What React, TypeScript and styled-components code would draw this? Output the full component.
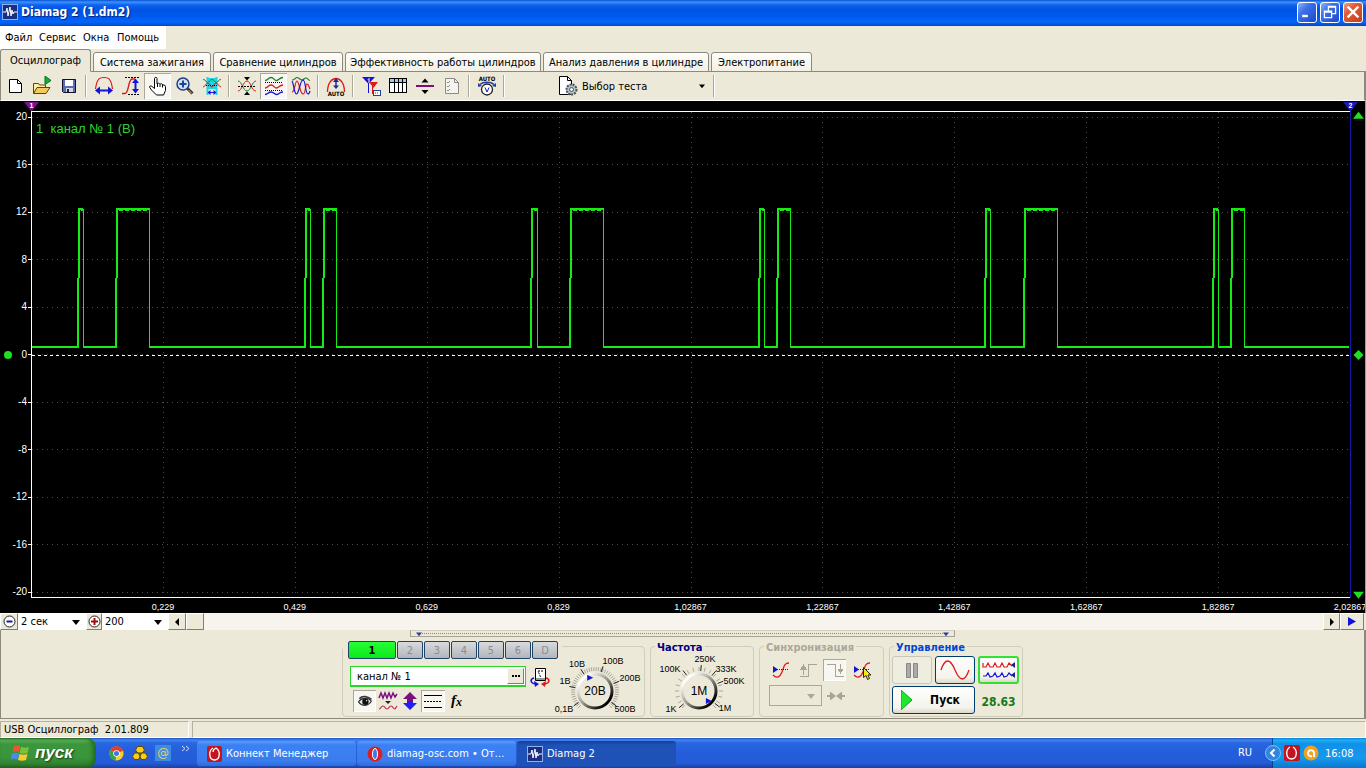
import React from "react";
import styled, { createGlobalStyle } from "styled-components";

const FONT = '"DejaVu Sans Condensed", "DejaVu Sans", "Liberation Sans", sans-serif';
const NARROW = '"Liberation Sans", Arial, sans-serif';
const FACE = "#ece9d8";
const LINE = "#8c8a7c";

const GlobalStyle = createGlobalStyle`
  * { box-sizing: border-box; }
  body { margin: 0; background: ${FACE}; font-family: ${FONT}; font-size: 11px; color: #000; }
  button, input, select { font: inherit; color: inherit; margin: 0; padding: 0; border: 0; background: none; border-radius: 0; outline: none; }
  svg { display: block; flex: none; }
`;

const Window = styled.div`
  display: flex;
  flex-direction: column;
  min-height: 100vh;
  overflow: hidden;
`;

/* ---------- title bar ---------- */

const TitleBar = styled.header`
  display: flex;
  align-items: center;
  gap: 3px;
  height: 26px;
  padding: 0 3px 2px 2px;
  background: linear-gradient(#0a50d0 0, #3b93ff 2px, #0f62ee 5px, #0054e3 10px, #0058ee 16px, #0266fb 22px, #0046c8 26px);
`;

const Title = styled.h1`
  flex: 1;
  margin: 0;
  color: #fff;
  font-size: 12px;
  font-weight: bold;
  line-height: 18px;
  text-shadow: 1px 1px 1px #0a1f7a;
`;

const CaptionButton = styled.button<{ $close?: boolean }>`
  display: grid;
  place-items: center;
  width: 20px;
  height: 21px;
  border: 1px solid #fff;
  border-radius: 3px;
  background: ${(p) =>
    p.$close
      ? "linear-gradient(135deg, #f0a08a, #e25b38 35%, #c83c14)"
      : "linear-gradient(135deg, #8fb4fb, #3c72ea 35%, #1c48c8)"};
`;

/* ---------- menu and tabs ---------- */

const MenuRow = styled.nav`
  display: flex;
  height: 23px;
`;

const MenuStrip = styled.div`
  display: flex;
  align-items: center;
  gap: 7px;
  padding: 0 9px 0 5px;
  background: #fff;
`;

const MenuItem = styled.button<{ $w: number }>`
  width: ${(p) => p.$w}px;
  text-align: left;
  white-space: nowrap;
`;

const Tabs = styled.div`
  display: flex;
  align-items: flex-end;
  gap: 2px;
  height: 23px;
  box-shadow: inset 0 -1px 0 ${LINE};
`;

const Tab = styled.button<{ $w: number; $active?: boolean }>`
  width: ${(p) => p.$w}px;
  height: ${(p) => (p.$active ? 23 : 20)}px;
  border: 1px solid ${LINE};
  border-bottom-color: ${(p) => (p.$active ? FACE : LINE)};
  border-radius: 3px 3px 0 0;
  background: ${(p) => (p.$active ? FACE : "linear-gradient(#fdfdfa, #f3f1e6)")};
  white-space: nowrap;
`;

/* ---------- toolbar ---------- */

const Toolbar = styled.div`
  display: flex;
  align-items: center;
  height: 29px;
  border-left: 1px solid ${LINE};
  border-right: 2px solid ${LINE};
  border-bottom: 1px solid #fff;
`;

const ToolButton = styled.button<{ $pressed?: boolean }>`
  display: grid;
  place-items: center;
  width: 27px;
  height: 26px;
  background: ${(p) => (p.$pressed ? "#f7f6f0" : "none")};
  box-shadow: ${(p) => (p.$pressed ? "inset 1px 1px 0 #aca899, inset -1px -1px 0 #fff" : "none")};
`;

const Separator = styled.span`
  width: 2px;
  height: 22px;
  margin: 0 3px;
  border-left: 1px solid #aca899;
  border-right: 1px solid #fff;
`;

const TestButton = styled.button`
  display: flex;
  align-items: center;
  gap: 4px;
  width: 202px;
  height: 24px;
  padding: 0 5px 0 49px;
  text-align: left;
  span { flex: 1; }
`;

/* ---------- oscilloscope screen ---------- */

const Scope = styled.main`
  flex: 1 1 0;
  display: grid;
  grid-template-columns: 31px minmax(0, 1fr) 15px;
  grid-template-rows: 10px minmax(0, 1fr) 15px;
  min-height: 300px;
  border-right: 1px solid #9a9ab0;
  background: #000;
  color: #fff;
  font-family: ${NARROW};
  font-size: 10px;
  overflow: hidden;
`;

const MarkerRow = styled.div`
  grid-column: 2;
  display: flex;
  justify-content: space-between;
  margin: 1px -8px 0 -7px;
`;

const YAxis = styled.ol`
  grid-column: 1;
  grid-row: 2;
  position: relative;
  display: flex;
  flex-direction: column;
  justify-content: space-between;
  margin: 0;
  padding: 0;
  list-style: none;
`;

const YLabel = styled.li`
  display: flex;
  align-items: center;
  justify-content: flex-end;
  gap: 1px;
  height: 12px;
  line-height: 12px;
  &::after { content: ""; width: 3px; height: 1px; background: #fff; }
`;

const ZeroDot = styled.i`
  position: absolute;
  left: 4px;
  top: calc(50% - 4px);
  width: 8px;
  height: 8px;
  border-radius: 50%;
  background: #1fe01f;
`;

const Screen = styled.section`
  grid-column: 2;
  grid-row: 2;
  position: relative;
  min-height: 0;
  border: solid #fff;
  border-width: 1px 0 1px 1px;
  box-shadow: 1px 0 0 #1818a8;
  svg { width: 100%; height: 100%; }
`;

const ChannelCaption = styled.p`
  position: absolute;
  left: 4px;
  top: 9px;
  margin: 0;
  color: #2fd42f;
  font-size: 13px;
  line-height: 16px;
  white-space: pre;
`;

const RightRail = styled.div`
  grid-column: 3;
  grid-row: 2;
  display: flex;
  flex-direction: column;
  align-items: flex-end;
  justify-content: space-between;
  margin: -2px 1px -2px 0;
`;

const XAxis = styled.ol`
  grid-column: 2;
  grid-row: 3;
  display: flex;
  margin: 0 -5% 0 5%;
  padding: 3px 0 0;
  list-style: none;
  font-size: 9px;
  line-height: 12px;
  li { flex: 1 1 0; text-align: center; }
`;

/* ---------- zoom and scroll row ---------- */

const ScrollRow = styled.div`
  display: flex;
  height: 17px;
  margin-right: 2px;
`;

const RaisedButton = styled.button<{ $w: number }>`
  display: grid;
  place-items: center;
  flex: none;
  width: ${(p) => p.$w}px;
  background: ${FACE};
  border: 1px solid;
  border-color: #fff #817f73 #817f73 #fff;
`;

const Combo = styled.label<{ $w: number; $disabled?: boolean }>`
  position: relative;
  display: flex;
  align-items: center;
  width: ${(p) => p.$w}px;
  height: ${(p) => (p.$disabled ? "21px" : "auto")};
  background: ${(p) => (p.$disabled ? FACE : "#fff")};
  border: ${(p) => (p.$disabled ? "1px solid #aca899" : "0")};
  select { appearance: none; width: 100%; padding-left: 3px; }
  svg { position: absolute; right: 6px; pointer-events: none; }
`;

const Track = styled.div`
  flex: 1;
  background: #f6f4ec;
`;

/* ---------- control deck ---------- */

const Deck = styled.section`
  display: flex;
  flex-direction: column;
  align-items: center;
  height: 89px;
  border: solid ${LINE};
  border-width: 0 2px 1px 1px;
`;

const Splitter = styled.div`
  display: flex;
  align-items: center;
  justify-content: space-between;
  width: 40%;
  height: 7px;
  padding: 0 5px;
  border: 1px solid #a5a395;
  border-top-color: #d2cfbf;
  span { flex: 1; height: 1px; border-top: 1px dotted #8a8878; }
`;

const Groups = styled.div`
  display: flex;
  align-items: flex-end;
  gap: 5px;
  height: 80px;
`;

const Group = styled.fieldset<{ $w: number }>`
  display: flex;
  width: ${(p) => p.$w}px;
  height: 71px;
  margin: 0;
  padding: 0;
  border: 1px solid #d0cdbb;
  border-radius: 4px;
  min-width: 0;
`;

const Legend = styled.h2<{ $color: string }>`
  margin: -6px 0 0 4px;
  padding: 0 2px;
  width: max-content;
  background: ${FACE};
  color: ${(p) => p.$color};
  font-size: 11px;
  line-height: 14px;
  font-weight: bold;
  white-space: nowrap;
`;

const Column = styled.div`
  display: flex;
  flex-direction: column;
  flex: none;
`;

const DialSlot = styled.div`
  margin-top: -8px;
`;

const ChannelTabs = styled.div`
  display: flex;
  gap: 1px;
  width: 219px;
  margin-top: -6px;
  padding: 0 5px;
  background: ${FACE};
`;

const ChannelTab = styled.button<{ $on?: boolean }>`
  flex: none;
  width: ${(p) => (p.$on ? 48 : 26)}px;
  height: 18px;
  border: 1px solid #1f4467;
  border-radius: 2px;
  background: ${(p) => (p.$on ? "linear-gradient(#25ff35, #0ce81c)" : "linear-gradient(#d8dadc, #b2b6bc)")};
  color: ${(p) => (p.$on ? "#000" : "#8a8d90")};
  font-weight: ${(p) => (p.$on ? "bold" : "normal")};
`;

const NameRow = styled.div`
  display: flex;
  align-items: center;
  gap: 4px;
  margin: 7px 0 0 7px;
`;

const NameBox = styled.label`
  display: flex;
  width: 176px;
  height: 21px;
  padding: 1px;
  border: 2px solid #2ad52a;
  border-width: 1px 1px 2px 1px;
  background: #fff;
  input { flex: 1; min-width: 0; padding-left: 5px; }
`;

const IconRow = styled.div`
  display: flex;
  align-items: center;
  margin: 3px 0 0 10px;
`;

const SmallTool = styled.button<{ $pressed?: boolean; $w?: number }>`
  display: grid;
  place-items: center;
  width: ${(p) => p.$w ?? 23}px;
  height: 22px;
  background: ${(p) => (p.$pressed ? "#f7f6f0" : "none")};
  box-shadow: ${(p) => (p.$pressed ? "inset 1px 1px 0 #aca899, inset -1px -1px 0 #fff" : "none")};
`;

const DialSvg = styled.svg`
  font-family: ${NARROW};
  font-size: 9px;
  overflow: visible;
`;

const SyncRow = styled.div`
  display: flex;
  align-items: center;
  gap: 4px;
  margin: 4px 0 0 9px;
`;

const ControlGrid = styled.div`
  display: grid;
  grid-template-columns: 40px 40px 41px;
  grid-template-rows: 28px 28px;
  gap: 2px 3px;
  margin: 1px 0 0 2px;
`;

const PushButton = styled.button<{ $disabled?: boolean; $tone?: "green"; $wide?: boolean }>`
  display: flex;
  align-items: center;
  justify-content: center;
  gap: 18px;
  grid-column: ${(p) => (p.$wide ? "span 2" : "auto")};
  padding-right: ${(p) => (p.$wide ? 6 : 0)}px;
  border: ${(p) => (p.$tone ? "2px solid #35e035" : p.$disabled ? "1px solid #c9c7ba" : "1px solid #003c74")};
  border-radius: 3px;
  background: ${(p) => (p.$disabled ? "#efece0" : "linear-gradient(#fff, #f4f3ec 80%, #dcd8c8)")};
  font-weight: bold;
  font-size: 12px;
`;

const Reading = styled.output`
  align-self: center;
  text-align: center;
  color: #157a15;
  font-size: 12px;
  line-height: 16px;
  font-weight: bold;
  padding-top: 4px;
`;

/* ---------- status bar ---------- */

const StatusBar = styled.footer`
  display: flex;
  gap: 3px;
  height: 19px;
  padding-top: 2px;
`;

const StatusCell = styled.p<{ $w?: number }>`
  flex: ${(p) => (p.$w ? `0 0 ${p.$w}px` : "1")};
  margin: 0;
  padding-left: 3px;
  border: 1px solid;
  border-color: #b4b1a1 #fff #fff #b4b1a1;
  line-height: 15px;
  white-space: pre;
`;

/* ---------- taskbar ---------- */

const Taskbar = styled.footer`
  display: flex;
  height: 30px;
  background: linear-gradient(#1f4fc0 0, #3f86f0 2px, #2a66e0 5px, #245edb 14px, #245bd8 25px, #1941a5 30px);
  color: #fff;
`;

const StartButton = styled.button`
  display: flex;
  align-items: center;
  gap: 5px;
  width: 96px;
  padding-left: 11px;
  border-radius: 0 9px 9px 0;
  background: linear-gradient(#2c6c2c 0, #5cb45c 2px, #3c963c 6px, #3a943a 20px, #2f7d2f 27px, #1f5a1f 30px);
  box-shadow: inset -3px 0 4px #1f6a1f;
  font-family: ${NARROW};
  font-size: 17px;
  font-weight: bold;
  font-style: italic;
  text-shadow: 1px 1px 2px #113a11;
`;

const QuickLaunch = styled.div`
  display: flex;
  align-items: center;
  gap: 8px;
  width: 101px;
  padding-left: 13px;
`;

const QuickButton = styled.button`
  display: grid;
  place-items: center;
  width: 15px;
  height: 20px;
`;

const TaskButton = styled.button<{ $active?: boolean }>`
  display: flex;
  align-items: center;
  gap: 4px;
  width: 159px;
  height: 25px;
  margin: 3px 1px 0 0;
  padding-left: 10px;
  border-radius: 3px;
  background: ${(p) =>
    p.$active ? "linear-gradient(#163f96, #1e52b7 4px, #1e52b7)" : "linear-gradient(#5a9bfb, #3c81f3 4px, #3a7cee 20px, #2f6bdc)"};
  white-space: nowrap;
`;

const Language = styled.span`
  margin: 0 20px 0 auto;
  line-height: 30px;
`;

const Tray = styled.div`
  display: flex;
  align-items: center;
  gap: 3px;
  width: 94px;
  border-left: 1px solid #0b3f9c;
  background: linear-gradient(#0d7fd8 0, #1cb0f7 2px, #1290e8 6px, #139aee 20px, #0f75cc 30px);
  svg:first-child { margin-left: -8px; }
  time { margin-left: 3px; }
`;

/* ---------- icons ---------- */

const RED = "#e01818";
const BLUE = "#1414d8";
const GREEN = "#1c7c2c";

const Glyph = ({ children, size = 20, crisp = false }: { children: React.ReactNode; size?: number; crisp?: boolean }) => (
  <svg width={size} height={size} viewBox="0 0 20 20" fill="none" shapeRendering={crisp ? "crispEdges" : "auto"} aria-hidden>
    {children}
  </svg>
);

const AppIcon = ({ size = 16 }: { size?: number }) => (
  <svg width={size} height={size} viewBox="0 0 16 16" aria-hidden>
    <rect x=".5" y=".5" width="15" height="15" fill="#1a2f80" stroke="#8fb0f0" />
    <path d="M1 8h3l1-4 1 8 2-9 1 9 1-6 1 4 1-2h3" fill="none" stroke="#fff" />
  </svg>
);

const NewIcon = () => (
  <Glyph><path d="M4.500 3.500h8l4 4v9h-12z" fill="#fff" stroke="#000" /><path d="M12.500 3.500v4h4" stroke="#000" /></Glyph>
);
const OpenIcon = () => (
  <Glyph>
    <path d="M1.500 17.500v-10h5l1 1.500h6v3" fill="#fff0a0" stroke="#5a4600" />
    <path d="M1.500 17.500l3.500-6h13l-4 6z" fill="#f5c860" stroke="#5a4600" />
    <path d="M13 0l6 4.500-6 4z" fill="#10b030" stroke="#0a7020" />
  </Glyph>
);
const SaveIcon = () => (
  <Glyph>
    <path d="M3.500 3.500h13v13h-12l-1-1z" fill="#5a6cb8" stroke="#101030" />
    <path d="M6 4h8v6H6z" fill="#fff" /><path d="M7 12h7v4H7z" fill="#d8d8e0" /><path d="M8 13h2v3H8z" fill="#202040" />
  </Glyph>
);
const ArchWidthIcon = () => (
  <Glyph>
    <path d="M1.500 13C3 1 7 1.500 10 1.500S17 1 18.500 13" stroke={RED} strokeWidth="1.200" />
    <path d="M4 14.500h12" stroke={BLUE} strokeWidth="2" /><path d="M1 14.500l5-4v8zM19 14.500l-5-4v8z" fill={BLUE} />
  </Glyph>
);
const RiseHeightIcon = () => (
  <Glyph>
    <path d="M1 17.500h3c4 0 3-14 7-14.500h3" stroke={RED} strokeWidth="1.400" />
    <path d="M4 1.500h14M7 18.500h11" stroke="#000" strokeDasharray="2 1" />
    <path d="M14.500 5v10" stroke={BLUE} strokeWidth="2" /><path d="M14.500 2.500l-3.500 4.500h7zM14.500 17.500L11 13h7z" fill={BLUE} />
  </Glyph>
);
const HandIcon = () => (
  <Glyph>
    <path d="M6.500 2.500c0-1.500 2.500-1.500 2.500 0V8l1.500-.8 1.500 1 1.500-.5 1.500 1.300 1.500 0 1 1.500v4l-2 4.500h-7L3.500 14l-2-3c0-1.200 1.500-1.500 2.500-.5l2.500 2z" fill="#fff" stroke="#000" />
    <path d="M9.500 8v3M12 8.500V11M14.500 9v2.500" stroke="#000" />
  </Glyph>
);
const ZoomIcon = () => (
  <Glyph>
    <path d="M12.500 12.500l5 5" stroke="#303030" strokeWidth="3" /><path d="M13.500 14l3.500 3.500" stroke="#d8b878" />
    <circle cx="8" cy="8" r="6" fill="#cfe4fa" stroke="#1f3c80" strokeWidth="1.500" /><path d="M4.500 8h7M8 4.500v7" stroke="#1f4090" strokeWidth="2" />
  </Glyph>
);
const RangeIcon = () => (
  <Glyph>
    <path d="M6 2h8v11H6z" fill="#18d8e8" /><path d="M5.500 1v18M14.500 1v18" stroke="#18d8e8" strokeWidth="2" />
    <path d="M1 3.500c3 0 3 3 4.500 3S8 3.500 10 3.500s3 3 4.500 3 1.500-3 4.500-3" stroke={GREEN} />
    <path d="M1 11c2 0 3-4 5-4s2 4 4 4 2-4 4-4 3 4 5 4" stroke={RED} />
    <path d="M4 9.500h12" stroke="#000" strokeDasharray="1 1" />
    <path d="M8 16.500h4" stroke={BLUE} /><path d="M5.500 16.500l3-2.500v5zM14.500 16.500l-3-2.500v5z" fill={BLUE} />
  </Glyph>
);
const CrossWavesIcon = () => (
  <Glyph>
    <path d="M1 15c4 0 5-10 9-10s4 10 9 10" stroke={RED} /><path d="M1 5c4 0 5 10 9 10S15 5 19 5" stroke={GREEN} />
    <path d="M1 10.500h18" stroke="#000" strokeDasharray="2 1" /><path d="M7 1h6l-3 3.500zM7 19h6l-3-3.500z" fill="#000" />
  </Glyph>
);
const StackWavesIcon = () => (
  <Glyph>
    <path d="M1 4.500c3 0 3-3 6-3s3 3 5.500 3 2.500-3 6.500-3" stroke={GREEN} strokeWidth="1.300" />
    <path d="M1 12c3 0 3-3 6-3s3 3 5.500 3 2.500-3 6.500-3" stroke={RED} strokeWidth="1.300" />
    <path d="M1 18.500c3 0 3-2.500 6-2.500s3 2.500 5.500 2.500 2.500-2.500 6.500-2.500" stroke={BLUE} strokeWidth="1.300" />
    <path d="M1 6.500h18M1 14.500h18" stroke="#000" strokeDasharray="1 1" />
  </Glyph>
);
const MixWavesIcon = () => (
  <Glyph>
    <path d="M1 4c3 0 3-2.500 5-2.500S9 4 11 4s2-2 4-2 2 2.500 4 2.500" stroke={GREEN} strokeWidth="1.200" />
    <path d="M1 16C4 16 4 5 6 5s3 13 6 13 2-10 4-10 2 4 3 5" stroke={RED} strokeWidth="1.200" />
    <path d="M1 5c2 3 2 13 4.500 13S9 4 12 4s2 14 5 14c1 0 1.500-1 2-3" stroke={BLUE} strokeWidth="1.200" />
  </Glyph>
);
const AutoArchIcon = () => (
  <Glyph>
    <path d="M1.500 16c0-18 17-18 17 0" stroke={RED} strokeWidth="1.300" />
    <path d="M10 4v8" stroke="#1c2c90" strokeWidth="1.500" /><path d="M10 2L7 6h6zM10 13L7 9.500h6z" fill="#1c2c90" />
    <text x="10" y="20" fontSize="6" fontWeight="bold" textAnchor="middle" fill="#000">AUTO</text>
  </Glyph>
);
const FlagsIcon = () => (
  <Glyph>
    <path d="M1 1h13L7.500 8z" fill={BLUE} /><path d="M7.500 3v14" stroke={BLUE} /><path d="M7 3.500l1-1V7" stroke="#fff" />
    <path d="M8 6h9l-4.500 6z" fill={RED} /><path d="M11.500 9v9" stroke={RED} />
    <rect x="12.500" y="14.500" width="7" height="5" fill="#fff" stroke="#28409a" /><path d="M14 17h4" stroke="#28409a" strokeDasharray="1 1" />
  </Glyph>
);
const TableIcon = () => (
  <Glyph crisp>
    <path d="M1.500 2.500h17v14h-17z" fill="#fff" stroke="#000" /><path d="M2 3h16v3H2z" fill="#a8c8ec" />
    <path d="M2 6.500h16M6.500 3v13M10.500 3v13M14.500 3v13" stroke="#000" />
  </Glyph>
);
const SplitIcon = () => (
  <Glyph><path d="M1 10h18" stroke="#7a1080" strokeWidth="2" /><path d="M6.500 6.500h7l-3.500-4zM6.500 14h7l-3.500 4z" fill="#000" /></Glyph>
);
const ChecklistIcon = () => (
  <Glyph>
    <path d="M3.500 2.500h9l4 4v11h-13z" fill="#f4f3ee" stroke="#8a8a86" /><path d="M12.500 2.500v4h4" stroke="#8a8a86" />
    <path d="M5 6l1 1 2-2M5 10l1 1 2-2M5 14l1 1 2-2" stroke="#8a8a86" />
  </Glyph>
);
const AutoGaugeIcon = () => (
  <Glyph>
    <text x="10" y="5" fontSize="6" fontWeight="bold" textAnchor="middle" fill="#000">AUTO</text>
    <circle cx="10" cy="13.500" r="5.500" fill="#fff" stroke="#202020" strokeWidth="1.300" />
    <path d="M8 11.500l2 4.500 2-4.500" stroke={BLUE} /><path d="M3 8.500C6 5.500 14 5.500 17 8.500" stroke="#28409a" strokeWidth="1.500" />
    <path d="M1 7v4l4-1zM19 7v4l-4-1z" fill="#28409a" />
  </Glyph>
);
const TestIcon = () => (
  <svg width="21" height="20" viewBox="0 0 21 20" fill="none" aria-hidden>
    <path d="M2.500.5h8l4 4v14h-12z" fill="#fff" stroke="#000" /><path d="M10.500.5v4h4" stroke="#000" />
    <circle cx="14.500" cy="13.500" r="5" fill="#b8c4c8" stroke="#4a5458" strokeWidth="2" strokeDasharray="2 1" /><circle cx="14.500" cy="13.500" r="2" fill="#f0f0f0" stroke="#4a5458" />
  </svg>
);
const Arrow = ({ dir, color = "#000", size = 8 }: { dir: "up" | "down" | "left" | "right"; color?: string; size?: number }) => {
  const d = { up: "M0 7h8L4 2z", down: "M0 2h8L4 7z", left: "M6 0v8L2 4z", right: "M2 0v8l4-4z" }[dir];
  return <svg width={size} height={size} viewBox="0 0 8 8" aria-hidden><path d={d} fill={color} /></svg>;
};
const SignIcon = ({ plus }: { plus?: boolean }) => (
  <svg width="13" height="13" viewBox="0 0 13 13" fill="none" aria-hidden>
    <circle cx="6.500" cy="6.500" r="5.500" fill="#fff" stroke="#222" />
    {plus ? <path d="M3 6.500h7M6.500 3v7" stroke="#a01010" strokeWidth="2" /> : <path d="M3.500 6.500h6" stroke="#1818a0" strokeWidth="2" />}
  </svg>
);
const Marker = ({ n, color }: { n: number; color: string }) => (
  <svg width="15" height="9" viewBox="0 0 15 9" aria-hidden>
    <path d="M0 0h15L8 9H7z" fill={color} />
    <text x="7.500" y="6" fontSize="7" fontWeight="bold" fill="#fff" textAnchor="middle">{n}</text>
  </svg>
);
const DeviceIcon = () => (
  <Glyph>
    <path d="M5.500 1.500h10v12h-10z" fill="#fff" stroke="#000" /><path d="M6 11h9v2H6z" fill="#8a9a96" /><path d="M10.500 10L8 4M8 4h5" stroke="#000" strokeDasharray="2 1" />
    <path d="M4 11c-4 1-4 5 1 6" stroke={BLUE} strokeWidth="1.500" /><path d="M4 14l5 3-4 3z" fill={BLUE} />
    <path d="M16 11c4 1 4 5-1 6" stroke={RED} strokeWidth="1.500" /><path d="M16 14l-5 3 4 3z" fill={RED} />
  </Glyph>
);
const EyeIcon = () => (
  <Glyph size={16}>
    <path d="M2 11c3-5 12-6 16-1-4 7-12 7-16 1z" fill="#e8e8e8" stroke="#333" strokeWidth="1.500" /><path d="M3 7c4-4 10-3 15 1" stroke="#333" strokeWidth="2" />
    <circle cx="10.500" cy="11" r="4" fill="#111" /><circle cx="12" cy="9.500" r="1" fill="#ccc" />
  </Glyph>
);
const SmoothIcon = () => (
  <Glyph>
    <path d="M1 7l2-5 2 5 2-5 2 5 2-5 2 5 2-5 2 4 2-3" stroke="#7a1080" strokeWidth="1.500" />
    <path d="M7 10h6l-3 3z" fill="#222" /><path d="M1 18c2 0 2-3 4-3s2 3 4 3 2-3 4-3 2 3 4 3l2-3" stroke="#c02050" strokeWidth="1.200" />
  </Glyph>
);
const UpDownIcon = () => (
  <Glyph>
    <path d="M10 1l7 7h-4v3H7V8H3z" fill="#7a1080" /><path d="M10 19l7-7h-4v-2H7v2H3z" fill="#2020f0" />
  </Glyph>
);
const LinesIcon = () => (
  <Glyph crisp><path d="M1 4.500h18M1 16.500h18" stroke="#000" /><path d="M1 10.500h18" stroke="#000" strokeDasharray="2 1" /></Glyph>
);
const FxIcon = () => (
  <Glyph><text x="4" y="14" fontFamily="Liberation Serif, serif" fontSize="15" fontStyle="italic" fontWeight="bold" fill="#000">f</text><text x="9" y="15" fontFamily="Liberation Serif, serif" fontSize="12" fontStyle="italic" fontWeight="bold" fill="#000">x</text></Glyph>
);
const SyncIcon = ({ cursor }: { cursor?: boolean }) => (
  <Glyph>
    <path d="M2 15c4 4 7 2 9-3S13 3 18 3" stroke={RED} strokeWidth="1.300" />
    <path d="M6 9.500h11" stroke={BLUE} strokeDasharray="1 1" /><path d="M2 6v7l5-3.500z" fill={BLUE} />
    {cursor && <path d="M11.500 7.500v10l2.500-2 1.500 4 2-1-1.500-3.500h3z" fill="#ffe800" stroke="#222" />}
  </Glyph>
);
const EdgeIcon = ({ fall }: { fall?: boolean }) => (
  <Glyph crisp>
    <path d={fall ? "M2 4.500h8.500v12H19" : "M2 16.500h8.500v-12H19"} stroke="#a8a595" strokeWidth="1" />
    {fall ? <path d="M15.500 4v8M13 9h5l-2.500 4z" stroke="#a8a595" fill="#a8a595" /> : <path d="M5.500 15V7M3 9h5L5.500 5z" stroke="#a8a595" fill="#a8a595" />}
  </Glyph>
);
const MeetIcon = () => (
  <Glyph><path d="M1 10h6M13 10h6" stroke="#a8a595" strokeWidth="2" /><path d="M4 5.500v9L10 10zM16 5.500v9L10 10z" fill="#a8a595" /></Glyph>
);

/* ---------- dials ---------- */

type Mark = [text: string, x: number, y: number];

const Dial = ({ width, cx, value, marks, pointer, dense, label }: {
  width: number; cx: number; value: string; marks: Mark[]; pointer: number; dense?: boolean; label: string;
}) => {
  const cy = 44;
  const polar = (deg: number, r: number) => {
    const a = (deg * Math.PI) / 180;
    return `${cx + r * Math.cos(a)} ${cy + r * Math.sin(a)}`;
  };
  const step = dense ? 6 : 15;
  const count = 270 / step + 1;
  return (
    <DialSvg width={width} height="69" viewBox={`0 0 ${width} 69`} role="slider" aria-label={label} aria-valuetext={value} aria-valuenow={0} tabIndex={0}>
      <defs>
        <linearGradient id={`rim${cx}`} x1="0.150" y1="0.150" x2="0.850" y2="0.850">
          <stop offset="0" stopColor="#fff" /><stop offset=".5" stopColor="#9a988e" /><stop offset="1" stopColor="#000" />
        </linearGradient>
      </defs>
      {Array.from({ length: count }, (_, i) => {
        const a = 135 + i * step;
        return <path key={i} d={`M${polar(a, 20)}L${polar(a, 24)}`} stroke="#aaa796" />;
      })}
      {(dense ? [145, 190, 237, 288, 338, 35] : [140, 232, 275, 310, 338, 38]).map((a) => (
        <path key={`m${a}`} d={`M${polar(a, 20)}L${polar(a, 26)}`} stroke="#222" />
      ))}
      <circle cx={cx} cy={cy} r="17" fill={FACE} stroke={`url(#rim${cx})`} strokeWidth="3" />
      <path d="M-3-3v6l6-3z" fill={BLUE} transform={`translate(${polar(pointer, 14)})`} />
      <text x={cx} y={cy + 4} fontSize="12" textAnchor="middle">{value}</text>
      {marks.map(([t, x, y]) => (
        <text key={t} x={x} y={y + 3} textAnchor="middle">{t}</text>
      ))}
    </DialSvg>
  );
};

/* ---------- waveform ---------- */

const HIGH = 97;
const LOW = 235;
const PULSES: [number, number][] = [
  [47, 52], [85, 118], [274, 279], [292, 305], [500, 506], [539, 572],
  [729, 734], [747, 760], [955, 960], [994, 1027], [1183, 1188], [1201, 1214],
];

const crest = (a: number, b: number) => {
  let d = `M${a} ${HIGH}`;
  for (let x = a + 3, k = 0; x < b; x += k % 2 ? 4 : 2, k++) d += `H${x}V${k % 2 ? HIGH : HIGH + 1}`;
  return `${d}H${b}`;
};

const baseline = () => {
  let d = `M0 ${LOW}`;
  PULSES.forEach(([a, b]) => { d += `H${a - 1}M${b} ${LOW}`; });
  return `${d}H1318`;
};

const Waveform = () => (
  <svg viewBox="0 0 1319 485" preserveAspectRatio="none" fill="none" shapeRendering="crispEdges" role="img" aria-label="канал № 1">
    <g stroke="#4a4a4a" strokeDasharray="1 4">
      {Array.from({ length: 11 }, (_, i) => <path key={i} vectorEffect="non-scaling-stroke" d={`M0 ${Math.floor(5 + i * 47.5) + 0.5}H1318`} />)}
      {Array.from({ length: 9 }, (_, i) => <path key={`v${i}`} vectorEffect="non-scaling-stroke" d={`M${131.5 + i * 132} 0V485`} />)}
    </g>
    <path d="M0 243.500H1318" stroke="#fff" strokeDasharray="3 3" vectorEffect="non-scaling-stroke" />
    <path d={baseline()} stroke="#14ec14" strokeWidth="2" vectorEffect="non-scaling-stroke" />
    {PULSES.map(([a, b]) => (
      <g key={a} stroke="#14ec14">
        <path d={`M${a} ${HIGH - 1}V166M${a - 1} 166V${LOW + 1}`} strokeWidth="2" vectorEffect="non-scaling-stroke" />
        <path d={crest(a, b)} strokeWidth="2" vectorEffect="non-scaling-stroke" />
        <path d={`M${b - 0.5} ${HIGH}V${LOW + 1}`} vectorEffect="non-scaling-stroke" />
      </g>
    ))}
  </svg>
);

const Y_LABELS = ["20", "16", "12", "8", "4", "0", "-4", "-8", "-12", "-16", "-20"];
const X_LABELS = ["0,229", "0,429", "0,629", "0,829", "1,02867", "1,22867", "1,42867", "1,62867", "1,82867", "2,02867"];

const TOOLS: ([string, React.ReactNode, boolean?] | null)[] = [
  ["Новый", <NewIcon />], ["Открыть", <OpenIcon />], ["Сохранить", <SaveIcon />], null,
  ["Ширина", <ArchWidthIcon />], ["Высота", <RiseHeightIcon />], ["Рука", <HandIcon />, true], ["Лупа", <ZoomIcon />], ["Диапазон", <RangeIcon />], null,
  ["Наложить", <CrossWavesIcon />], ["Разнести", <StackWavesIcon />, true], ["Смешать", <MixWavesIcon />], null,
  ["Авто", <AutoArchIcon />], null,
  ["Маркеры", <FlagsIcon />], ["Таблица", <TableIcon />], ["Разделить", <SplitIcon />], ["Список", <ChecklistIcon />], null,
  ["Автоизмерение", <AutoGaugeIcon />], null,
];

export default function App() {
  return (
    <Window>
      <GlobalStyle />
      <TitleBar>
        <AppIcon />
        <Title>Diamag 2 (1.dm2)</Title>
        <CaptionButton aria-label="Свернуть"><Glyph size={16}><path d="M4 15h7" stroke="#fff" strokeWidth="3" /></Glyph></CaptionButton>
        <CaptionButton aria-label="Восстановить">
          <Glyph size={16}><path d="M3 9h9v8H3zM3 10h9M8 8V3h9v9h-4M8 4h9" stroke="#fff" strokeWidth="1.600" /></Glyph>
        </CaptionButton>
        <CaptionButton $close aria-label="Закрыть"><Glyph size={18}><path d="M4 4l12 12M16 4L4 16" stroke="#fff" strokeWidth="2.600" /></Glyph></CaptionButton>
      </TitleBar>

      <MenuRow>
        <MenuStrip>
          <MenuItem $w={27}>Файл</MenuItem>
          <MenuItem $w={37}>Сервис</MenuItem>
          <MenuItem $w={27}>Окна</MenuItem>
          <MenuItem $w={40}>Помощь</MenuItem>
        </MenuStrip>
      </MenuRow>

      <Tabs role="tablist">
        <Tab role="tab" $w={91} $active>Осциллограф</Tab>
        <Tab role="tab" $w={118}>Система зажигания</Tab>
        <Tab role="tab" $w={130}>Сравнение цилиндров</Tab>
        <Tab role="tab" $w={196}>Эффективность работы цилиндров</Tab>
        <Tab role="tab" $w={166}>Анализ давления в цилиндре</Tab>
        <Tab role="tab" $w={101}>Электропитание</Tab>
      </Tabs>

      <Toolbar>
        {TOOLS.map((t, i) =>
          t ? <ToolButton key={i} aria-label={t[0]} $pressed={t[2]}>{t[1]}</ToolButton> : <Separator key={i} />
        )}
        <TestButton><TestIcon /><span>Выбор теста</span><Arrow dir="down" size={6} /></TestButton>
        <Separator />
      </Toolbar>

      <Scope>
        <MarkerRow><Marker n={1} color="#7a1488" /><Marker n={2} color="#1818b8" /></MarkerRow>
        <YAxis>
          {Y_LABELS.map((t) => <YLabel key={t}>{t}</YLabel>)}
          <ZeroDot />
        </YAxis>
        <Screen>
          <Waveform />
          <ChannelCaption>1  канал № 1 (В)</ChannelCaption>
        </Screen>
        <RightRail>
          <Arrow dir="up" color="#1fe01f" size={11} />
          <svg width="11" height="10" viewBox="0 0 11 10" aria-hidden><path d="M5.500 0l5 5-5 5-5-5z" fill="#1fe01f" /></svg>
          <Arrow dir="down" color="#1fe01f" size={11} />
        </RightRail>
        <XAxis>{X_LABELS.map((t) => <li key={t}>{t}</li>)}</XAxis>
      </Scope>

      <ScrollRow>
        <RaisedButton $w={18} aria-label="Уменьшить"><SignIcon /></RaisedButton>
        <Combo $w={68}><select aria-label="Развёртка"><option>2 сек</option></select><Arrow dir="down" /></Combo>
        <RaisedButton $w={16} aria-label="Увеличить"><SignIcon plus /></RaisedButton>
        <Combo $w={66}><select aria-label="Масштаб"><option>200</option></select><Arrow dir="down" /></Combo>
        <RaisedButton $w={18} aria-label="Влево"><Arrow dir="left" /></RaisedButton>
        <RaisedButton $w={18} aria-label="Ползунок" />
        <Track />
        <RaisedButton $w={17} aria-label="Вправо"><Arrow dir="right" /></RaisedButton>
        <RaisedButton $w={24} aria-label="В конец">
          <svg width="8" height="9" viewBox="0 0 8 9" aria-hidden><path d="M0 0v9l8-4.500z" fill="#1010e0" /></svg>
        </RaisedButton>
      </ScrollRow>

      <Deck>
        <Splitter><Arrow dir="down" color="#28409a" size={6} /><span /><Arrow dir="down" color="#28409a" size={6} /></Splitter>
        <Groups>
          <Group $w={303} aria-label="Каналы">
            <Column>
              <ChannelTabs>
                <ChannelTab $on>1</ChannelTab>
                {["2", "3", "4", "5", "6", "D"].map((c) => <ChannelTab key={c}>{c}</ChannelTab>)}
              </ChannelTabs>
              <NameRow>
                <NameBox>
                  <input defaultValue="канал № 1" aria-label="Имя канала" />
                  <RaisedButton $w={17} aria-label="Выбрать">
                    <svg width="8" height="2" viewBox="0 0 8 2" aria-hidden><path d="M0 0h2v2H0zM3 0h2v2H3zM6 0h2v2H6z" /></svg>
                  </RaisedButton>
                </NameBox>
                <DeviceIcon />
              </NameRow>
              <IconRow>
                <SmallTool $pressed aria-label="Показать"><EyeIcon /></SmallTool>
                <SmallTool aria-label="Сгладить"><SmoothIcon /></SmallTool>
                <SmallTool $w={22} aria-label="Сдвиг"><UpDownIcon /></SmallTool>
                <SmallTool $w={24} $pressed aria-label="Линии"><LinesIcon /></SmallTool>
                <SmallTool aria-label="Функция"><FxIcon /></SmallTool>
              </IconRow>
            </Column>
            <Dial width={82} cx={33} value="20В" label="Диапазон" dense pointer={250}
              marks={[["10В", 15, 17], ["100В", 51, 14], ["200В", 68, 31], ["1В", 3, 34], ["0,1В", 2, 62], ["500В", 63, 62]]} />
          </Group>

          <Group $w={104}>
            <Column>
              <Legend $color="#000080">Частота</Legend>
              <DialSlot>
                <Dial width={102} cx={48} value="1М" label="Частота" pointer={45}
                  marks={[["250K", 54, 12], ["100K", 19, 22], ["333K", 75, 22], ["500K", 83, 34], ["1K", 20, 62], ["1M", 74, 61]]} />
              </DialSlot>
            </Column>
          </Group>

          <Group $w={125}>
            <Column>
              <Legend $color="#aca899">Синхронизация</Legend>
              <SyncRow>
                <SmallTool aria-label="Уровень"><SyncIcon /></SmallTool>
                <SmallTool aria-label="По фронту" disabled><EdgeIcon /></SmallTool>
                <SmallTool aria-label="По спаду" disabled $pressed><EdgeIcon fall /></SmallTool>
                <SmallTool aria-label="Выбрать уровень"><SyncIcon cursor /></SmallTool>
              </SyncRow>
              <SyncRow>
                <Combo $w={53} $disabled><select disabled aria-label="Канал синхронизации" /><Arrow dir="down" color="#aca899" /></Combo>
                <MeetIcon />
              </SyncRow>
            </Column>
          </Group>

          <Group $w={134}>
            <Column>
              <Legend $color="#0046d5">Управление</Legend>
              <ControlGrid>
                <PushButton disabled $disabled aria-label="Пауза">
                  <svg width="12" height="15" viewBox="0 0 12 15" aria-hidden><path d="M.5.5h4v14h-4zM7.500.5h4v14h-4z" fill="#aaa" stroke="#888" /></svg>
                </PushButton>
                <PushButton aria-label="Одиночный">
                  <svg width="30" height="20" viewBox="0 0 30 20" fill="none" aria-hidden><path d="M1 10C5-2 10-2 15 10s10 12 14 0" stroke={RED} strokeWidth="1.300" /></svg>
                </PushButton>
                <PushButton $tone="green" aria-label="Непрерывный">
                  <svg width="34" height="20" viewBox="0 0 34 20" fill="none" aria-hidden>
                    <path d="M1 3v4h3l2-4 2 4h3l2-4 2 4h3l2-4 2 4h3l2-4 3 3" stroke={RED} strokeWidth="1.200" />
                    <path d="M1 16h3l2-3 2 4 3-1 2-3 2 4 3-1 2-3 2 4 3-1 2-3 3 3" stroke={BLUE} strokeWidth="1.200" />
                    <path d="M33 2v6l-4-3zM33 12v6l-4-3z" fill="#182090" />
                  </svg>
                </PushButton>
                <PushButton $wide>
                  <svg width="11" height="20" viewBox="0 0 11 20" aria-hidden><path d="M0 0v20l11-10z" fill="#1ce82c" stroke="#10a020" /></svg>
                  Пуск
                </PushButton>
                <Reading>28.63</Reading>
              </ControlGrid>
            </Column>
          </Group>
        </Groups>
      </Deck>

      <StatusBar>
        <StatusCell $w={189}>USB Осциллограф  2.01.809</StatusCell>
        <StatusCell />
      </StatusBar>

      <Taskbar>
        <StartButton>
          <svg width="19" height="18" viewBox="0 0 19 18" aria-hidden>
            <path d="M3 2c2-1 4-1 6 0L8 8C6 7 4 7 1.500 8z" fill="#f0562c" /><path d="M10 3c3 1 5 1 8 0l-1.500 6c-3 1-5 1-8 0z" fill="#7ac23c" />
            <path d="M1 9.500c3-1 5-1 7 0l-1.500 6c-2-1-4-1-7 0z" fill="#4a8af0" /><path d="M8.500 10c3 1 5 1 8 0L15 16c-3 1-5 1-8 0z" fill="#fbc930" />
          </svg>
          пуск
        </StartButton>
        <QuickLaunch>
          <QuickButton aria-label="Chrome">
            <svg width="15" height="15" viewBox="0 0 16 16" aria-hidden>
              <circle cx="8" cy="8" r="7.500" fill="#fbcf30" /><path d="M8 8L1.200 4.500A7.500 7.500 0 0 1 15 5z" fill="#e0402c" /><path d="M8 8L1.200 4.500A7.500 7.500 0 0 0 7 15.500z" fill="#3aa04a" />
              <circle cx="8" cy="8" r="3.500" fill="#fff" /><circle cx="8" cy="8" r="2.700" fill="#3a78e8" />
            </svg>
          </QuickButton>
          <QuickButton aria-label="Билайн">
            <svg width="16" height="16" viewBox="0 0 16 16" aria-hidden><g fill="#f8cc18" stroke="#604800"><path d="M5.500 1.500h5l2 3.500-2 3h-5l-2-3z" /><path d="M2.500 8h4l1.500 3.500-1.500 3h-4L.5 11.500z" /><path d="M9.500 8h4l2 3.500-2 3h-4L8 11.500z" /></g></svg>
          </QuickButton>
          <QuickButton aria-label="Почта">
            <svg width="16" height="16" viewBox="0 0 16 16" aria-hidden><rect width="16" height="16" fill="#3c8ce0" /><text x="8" y="12" fontSize="13" textAnchor="middle" fill="#f8c868">@</text></svg>
          </QuickButton>
          <QuickButton aria-label="Ещё">
            <svg width="9" height="18" viewBox="0 0 9 18" fill="none" aria-hidden><path d="M1 2l3 2.500L1 7M5 2l3 2.500L5 7" stroke="#cfe0ff" /></svg>
          </QuickButton>
        </QuickLaunch>
        <TaskButton>
          <svg width="15" height="16" viewBox="0 0 15 16" fill="none" aria-hidden><rect width="15" height="16" rx="2" fill="#c41420" /><path d="M6 2C1 5 2 14 7.500 14S14 5 9 2C7 3 6 4 6 6" stroke="#fff" strokeWidth="1.300" /></svg>
          Коннект Менеджер
        </TaskButton>
        <TaskButton>
          <svg width="16" height="16" viewBox="0 0 16 16" aria-hidden><circle cx="8" cy="8" r="7.500" fill="#d82020" /><ellipse cx="8" cy="8" rx="2.500" ry="5.500" fill="#3c78e8" stroke="#fff" /></svg>
          diamag-osc.com • От…
        </TaskButton>
        <TaskButton $active><AppIcon />Diamag 2</TaskButton>
        <Language>RU</Language>
        <Tray>
          <svg width="16" height="16" viewBox="0 0 16 16" fill="none" aria-hidden><circle cx="8" cy="8" r="7.500" fill="#2f86e0" stroke="#7cc0f8" /><path d="M9.500 4.500L6 8l3.500 3.500" stroke="#fff" strokeWidth="2" /></svg>
          <svg width="16" height="16" viewBox="0 0 16 16" fill="none" aria-hidden><rect width="16" height="16" rx="2" fill="#c41420" /><path d="M6 2C1 5 2 14 7.500 14S14 5 9 2" stroke="#fff" strokeWidth="1.300" /></svg>
          <svg width="16" height="16" viewBox="0 0 16 16" fill="none" aria-hidden><circle cx="8" cy="8" r="7.500" fill="#f4a020" /><path d="M11 12V8a3 3 0 1 0-2 3" stroke="#fff" strokeWidth="2" /></svg>
          <time>16:08</time>
        </Tray>
      </Taskbar>
    </Window>
  );
}
